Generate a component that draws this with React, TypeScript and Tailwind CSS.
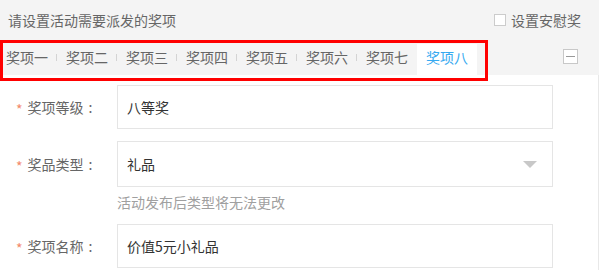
import React from 'react';

const tabs = ['奖项一', '奖项二', '奖项三', '奖项四', '奖项五', '奖项六', '奖项七', '奖项八'];
const activeIndex = 7;

const Label = ({ text }: { text: string }) => (
  <div className="w-[117px] shrink-0 pl-[16px] flex items-center text-[#666]">
    <span className="text-[#f3896b] mr-[5px] leading-none pt-[4px]">*</span>
    <span>{text}</span>
    <span className="w-[14px] text-center">:</span>
  </div>
);

const App = () => {
  return (
    <div className="relative w-[599px] h-[270px] overflow-hidden bg-white text-[14px] font-['Noto_Sans_CJK_SC','Liberation_Sans',sans-serif]">
      {/* Header */}
      <div className="bg-[#f4f4f4] h-[75px]">
        <div className="h-[40px] flex items-center justify-between pl-[8px] pr-[18px] text-[#666]">
          <span>请设置活动需要派发的奖项</span>
          <label className="flex items-center gap-[5px]">
            <span className="w-[12px] h-[12px] border border-[#ccc] bg-white" />
            <span>设置安慰奖</span>
          </label>
        </div>
        <div className="h-[31px] mt-[4px] flex items-start pr-[21px]">
          <div className="flex -ml-[3px]">
            {tabs.map((t, i) => {
              const active = i === activeIndex;
              const showSep = i < tabs.length - 1 && i + 1 !== activeIndex && !active;
              return (
                <div
                  key={t}
                  className={`relative w-[60px] h-[31px] text-center leading-[26px] ${
                    active ? 'bg-white text-[#35a9f0]' : 'text-[#666]'
                  } ${
                    showSep
                      ? "after:content-[''] after:absolute after:right-0 after:top-[10px] after:h-[7px] after:w-px after:bg-[#d4d4d4]"
                      : ''
                  }`}
                >
                  {t}
                </div>
              );
            })}
          </div>
          <div className="ml-auto mt-[5px] w-[15px] h-[15px] border border-[#c8c8c8] bg-white flex items-center justify-center">
            <span className="w-[9px] h-px bg-[#999]" />
          </div>
        </div>
      </div>

      {/* Form */}
      <div className="border-r border-[#e8e8e8] h-[195px] pt-[10px]">
        <div className="flex h-[44px]">
          <Label text="奖项等级" />
          <div className="w-[436px] h-[44px] border border-[#e5e5e5] pl-[9px] flex items-center text-[#333]">
            八等奖
          </div>
        </div>

        <div className="flex h-[46px] mt-[12px]">
          <Label text="奖品类型" />
          <div className="w-[436px] h-[46px] border border-[#e5e5e5] pl-[9px] pr-[15px] flex items-center justify-between text-[#333]">
            <span>礼品</span>
            <svg width="14" height="7" viewBox="0 0 14 7">
              <path d="M0 0 L14 0 L7 7 Z" fill="#c8c8c8" />
            </svg>
          </div>
        </div>
        <div className="ml-[117px] mt-[5px] h-[20px] leading-[20px] text-[#a0a0a0]">
          活动发布后类型将无法更改
        </div>

        <div className="flex h-[44px] mt-[12px]">
          <Label text="奖项名称" />
          <div className="w-[436px] h-[44px] border border-[#e5e5e5] pl-[9px] flex items-center text-[#333]">
            价值5元小礼品
          </div>
        </div>
      </div>

      {/* Annotation box */}
      <div className="absolute left-0 top-[40px] w-[488px] h-[41px] border-[3px] border-[#ff0000] pointer-events-none" />
    </div>
  );
};

export default App;
